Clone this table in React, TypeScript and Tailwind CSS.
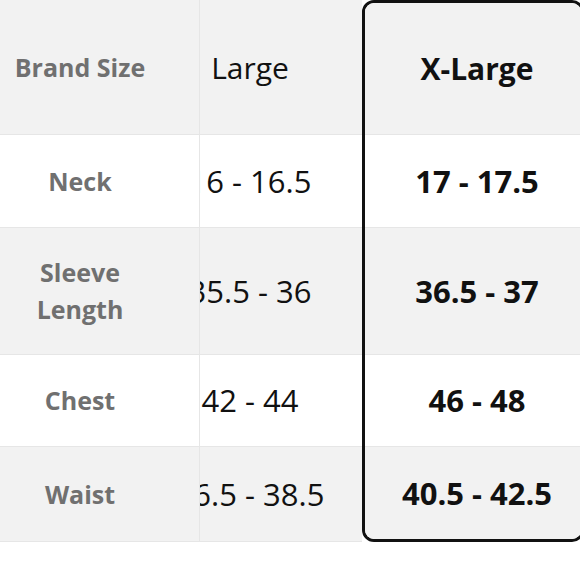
const rows = [
  { label: ['Brand Size'], large: 'Large', xl: 'X-Large', h: 'h-[135px]', xh: 'h-[132px]', shade: true, head: true },
  { label: ['Neck'], large: '16 - 16.5', xl: '17 - 17.5', h: 'h-[93px]', xh: 'h-[93px]', shade: false, head: false },
  { label: ['Sleeve', 'Length'], large: '35.5 - 36', xl: '36.5 - 37', h: 'h-[127px]', xh: 'h-[127px]', shade: true, head: false },
  { label: ['Chest'], large: '42 - 44', xl: '46 - 48', h: 'h-[92px]', xh: 'h-[92px]', shade: false, head: false },
  { label: ['Waist'], large: '36.5 - 38.5', xl: '40.5 - 42.5', h: 'h-[95px]', xh: 'h-[92px]', shade: true, head: false },
]

export default function App() {
  return (
    <div className="w-[580px] h-[580px] overflow-hidden bg-white font-['Open_Sans',sans-serif]">
      <div className="flex w-[700px]">
        {/* measurement names */}
        <div className="flex flex-col w-[200px] shrink-0 border-r border-[#e6e6e6]">
          {rows.map((r, i) => (
            <div
              key={i}
              className={`${r.h} ${r.shade ? 'bg-[#f2f2f2]' : 'bg-white'} border-b border-[#e6e6e6] flex flex-col items-center justify-center pr-[39px] text-[25px] leading-[37px] font-bold text-[#707070]`}
            >
              {r.label.map((l) => (
                <span key={l}>{l}</span>
              ))}
            </div>
          ))}
        </div>

        {/* Large, partly scrolled under the first column */}
        <div className="flex flex-col w-[162px] shrink-0">
          {rows.map((r, i) => (
            <div
              key={i}
              className={`${r.h} ${r.shade ? 'bg-[#f2f2f2]' : 'bg-white'} border-b border-[#e6e6e6] overflow-hidden flex items-center`}
            >
              <div
                className={`w-[222px] ml-[-61px] shrink-0 text-center ${r.head ? 'text-[30px]' : 'text-[31px]'} text-[#111] whitespace-nowrap`}
              >
                {r.large}
              </div>
            </div>
          ))}
        </div>

        {/* X-Large, selected; its right edge runs just past the viewport */}
        <div className="flex flex-col w-[222px] shrink-0 border-[3px] border-[#111] rounded-[12px] overflow-hidden">
          {rows.map((r, i) => (
            <div
              key={i}
              className={`${r.xh} ${r.shade ? 'bg-[#f2f2f2]' : 'bg-white'} ${i < rows.length - 1 ? 'border-b border-[#e6e6e6]' : ''} flex items-center`}
            >
              <div className={`w-[224px] shrink-0 text-center ${r.head ? 'text-[30px]' : 'text-[31px]'} font-bold text-[#111] whitespace-nowrap`}>
                {r.xl}
              </div>
            </div>
          ))}
        </div>
      </div>
    </div>
  )
}
